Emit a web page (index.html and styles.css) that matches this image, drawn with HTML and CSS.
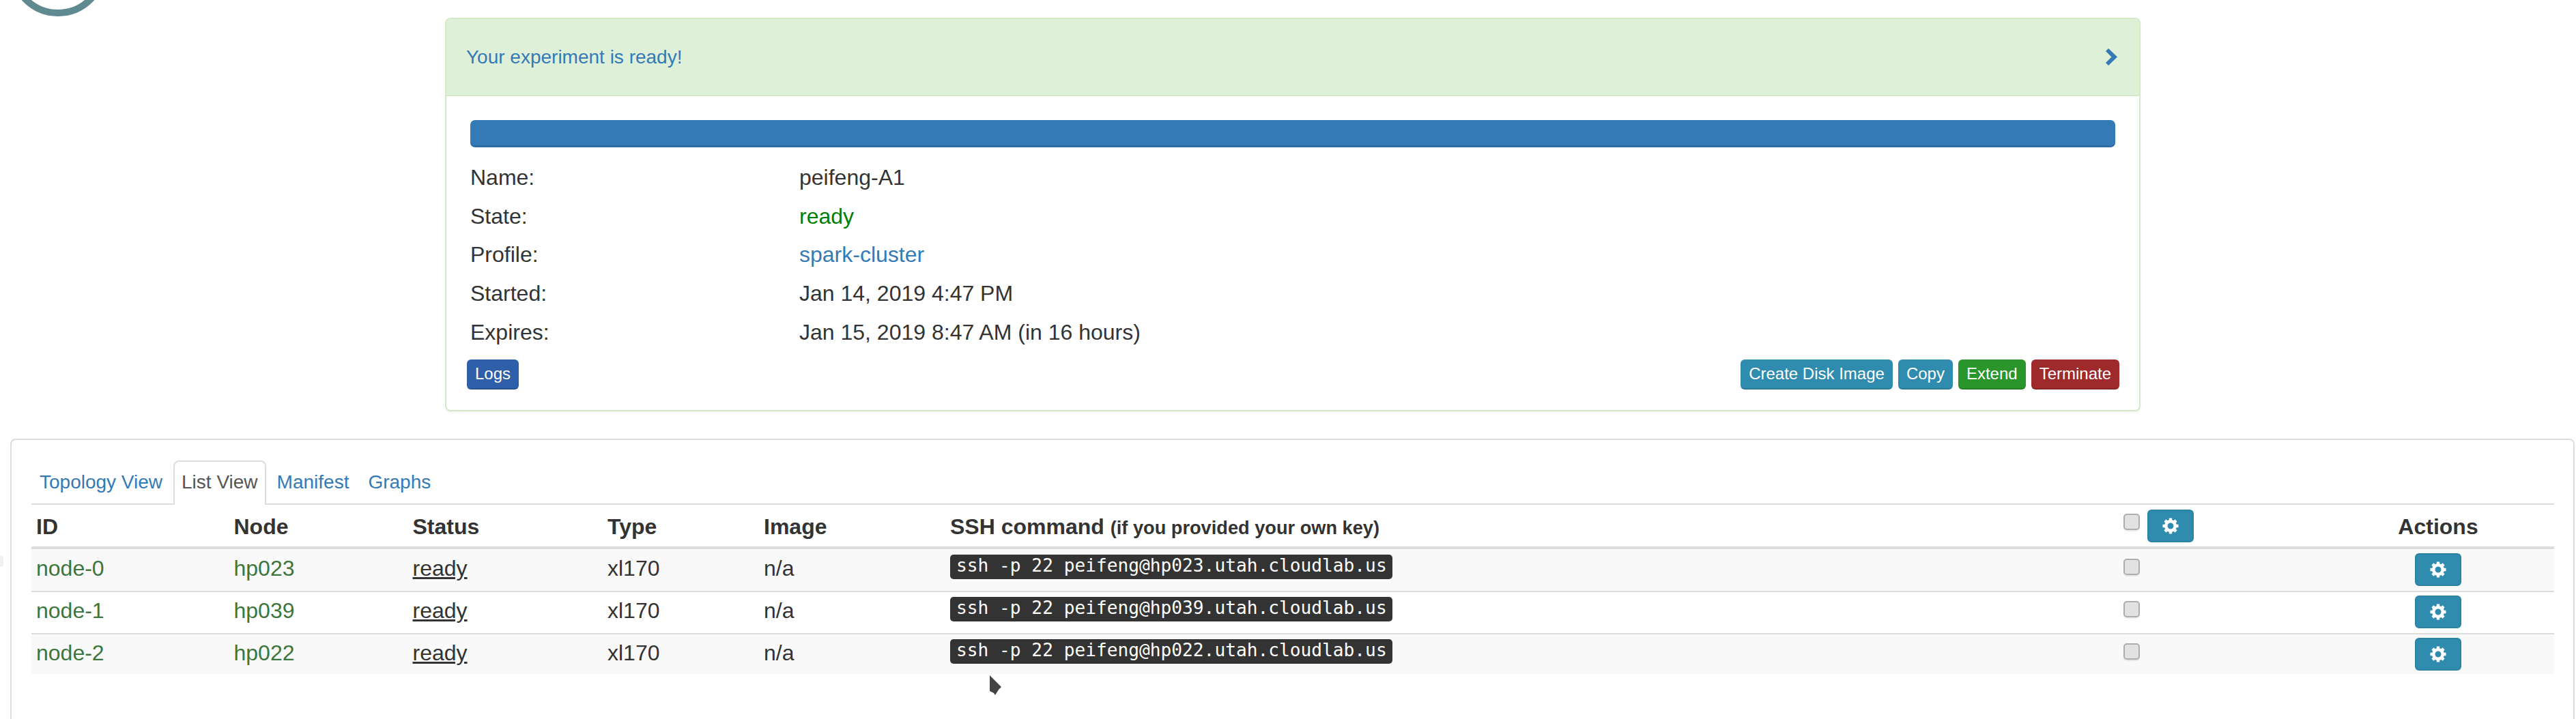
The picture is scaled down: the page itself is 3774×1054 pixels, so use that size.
FILE: index.html
```html
<!DOCTYPE html>
<html lang="en">
<head>
	<meta charset="UTF-8">
	<title>experiment status</title>
	<link rel="stylesheet" href="styles.css">
</head>
<body>
	<!-- bottom of the logo ring, cut off by the page top -->
	<svg class="logo" width="170" height="30" viewBox="0 0 170 30"><circle cx="85" cy="-47.5" r="66.5" fill="none" stroke="#5f8a90" stroke-width="10"/></svg>
	<div class="edge-tab"></div>

	<div class="status-panel">
		<div class="status-head">
			<span>Your experiment is ready!</span>
			<svg class="chevron" width="17" height="25" viewBox="0 0 17 25"><polygon points="0,4 4,0 17,12.5 4,25 0,21 8.5,12.5" fill="#337ab7"/></svg>
		</div>
		<div class="status-body">
			<div class="progress"></div>
			<dl class="info">
				<dt>Name:</dt><dd>peifeng-A1</dd>
				<dt>State:</dt><dd class="state-ready">ready</dd>
				<dt>Profile:</dt><dd><a href="#">spark-cluster</a></dd>
				<dt>Started:</dt><dd>Jan 14, 2019 4:47 PM</dd>
				<dt>Expires:</dt><dd>Jan 15, 2019 8:47 AM (in 16 hours)</dd>
			</dl>
			<div class="status-actions">
				<button class="btn btn-logs">Logs</button>
				<div class="btn-group">
					<button class="btn btn-info">Create Disk Image</button>
					<button class="btn btn-info">Copy</button>
					<button class="btn btn-extend">Extend</button>
					<button class="btn btn-danger">Terminate</button>
				</div>
			</div>
		</div>
	</div>

	<div class="view-panel">
		<ul class="tabs">
			<li><a href="#">Topology View</a></li>
			<li class="active"><a href="#">List View</a></li>
			<li><a href="#">Manifest</a></li>
			<li><a href="#">Graphs</a></li>
		</ul>
		<table class="nodes">
			<colgroup>
				<col class="c-id"><col class="c-node"><col class="c-status"><col class="c-type"><col class="c-image"><col class="c-ssh"><col class="c-check"><col class="c-actions">
			</colgroup>
			<thead>
				<tr>
					<th>ID</th>
					<th>Node</th>
					<th>Status</th>
					<th>Type</th>
					<th>Image</th>
					<th>SSH command <small>(if you provided your own key)</small></th>
					<th class="th-tools">
						<div class="tools">
							<input type="checkbox" class="check">
							<button class="gear-btn"><svg width="24" height="24" viewBox="0 0 24 24"><use href="#cog"/></svg></button>
						</div>
					</th>
					<th class="center">Actions</th>
				</tr>
			</thead>
			<tbody>
				<tr>
					<td class="node-link">node-0</td>
					<td class="node-link">hp023</td>
					<td><a class="status-link" href="#">ready</a></td>
					<td>xl170</td>
					<td>n/a</td>
					<td><code>ssh -p 22 peifeng@hp023.utah.cloudlab.us</code></td>
					<td><input type="checkbox" class="check check-row"></td>
					<td class="center"><button class="gear-btn"><svg width="24" height="24" viewBox="0 0 24 24"><use href="#cog"/></svg></button></td>
				</tr>
				<tr>
					<td class="node-link">node-1</td>
					<td class="node-link">hp039</td>
					<td><a class="status-link" href="#">ready</a></td>
					<td>xl170</td>
					<td>n/a</td>
					<td><code>ssh -p 22 peifeng@hp039.utah.cloudlab.us</code></td>
					<td><input type="checkbox" class="check check-row"></td>
					<td class="center"><button class="gear-btn"><svg width="24" height="24" viewBox="0 0 24 24"><use href="#cog"/></svg></button></td>
				</tr>
				<tr>
					<td class="node-link">node-2</td>
					<td class="node-link">hp022</td>
					<td><a class="status-link" href="#">ready</a></td>
					<td>xl170</td>
					<td>n/a</td>
					<td><code>ssh -p 22 peifeng@hp022.utah.cloudlab.us</code></td>
					<td><input type="checkbox" class="check check-row"></td>
					<td class="center"><button class="gear-btn"><svg width="24" height="24" viewBox="0 0 24 24"><use href="#cog"/></svg></button></td>
				</tr>
			</tbody>
		</table>
	</div>

	<!-- mouse pointer caught in the screenshot -->
	<svg class="pointer" width="24" height="36" viewBox="-3 -3 24 36"><polygon points="0,0 17,17 13,21 8,29 6,26 0,23" fill="#444" stroke="#fff" stroke-width="2" paint-order="stroke" stroke-linejoin="round"/></svg>

	<svg class="defs" width="0" height="0">
		<defs>
			<g id="cog" fill="none" stroke="#fff">
				<circle cx="12" cy="12" r="6.8" stroke-width="4.6"/>
				<path stroke-width="4.4" d="M12 .5v5M12 18.5v5M.5 12h5M18.5 12h5M3.9 3.9l3.5 3.5M16.6 16.6l3.5 3.5M20.1 3.9l-3.5 3.5M7.4 16.6l-3.5 3.5"/>
			</g>
		</defs>
	</svg>
</body>
</html>
```

FILE: styles.css
```css
html,
body {
	height: 100%;
}
body {
	margin: 0;
	overflow: hidden;
	position: relative;
	background: #fff;
	color: #333;
	font-family: "Liberation Sans", Arial, sans-serif;
	font-size: 32px;
}
a {
	color: #337ab7;
	text-decoration: none;
}
ul,
dl,
dd,
dt {
	margin: 0;
	padding: 0;
}
li {
	list-style: none;
}

.logo {
	position: absolute;
	left: 0;
	top: 0;
}
.edge-tab {
	position: absolute;
	left: 0;
	top: 815px;
	width: 5px;
	height: 16px;
	background: #f1f1f1;
	border-radius: 0 3px 3px 0;
}
.pointer {
	position: absolute;
	left: 1447px;
	top: 987px;
}
.defs {
	position: absolute;
}

/* top panel */
.status-panel {
	box-sizing: border-box;
	width: 2484px;
	margin: 26px 0 0 652px;
	border: 2px solid #d6e9c6;
	border-radius: 8px;
	box-shadow: 0 2px 3px rgba(0, 0, 0, .05);
}
.status-head {
	display: flex;
	justify-content: space-between;
	align-items: center;
	height: 111px;
	padding: 0 32px 0 29px;
	background: #dff0d8;
	border-bottom: 2px solid #d6e9c6;
	border-radius: 6px 6px 0 0;
	color: #337ab7;
	font-size: 28px;
}
.status-body {
	padding: 35px 35px 30px;
}
.progress {
	height: 40px;
	background: #337ab7;
	border-bottom: 3px solid #2e6da4;
	border-radius: 7px;
	box-sizing: border-box;
}
.info {
	display: grid;
	grid-template-columns: 482px 1fr;
	grid-auto-rows: 56.8px;
	align-items: center;
	margin-top: 16px;
}
.state-ready {
	color: #008000;
}
.status-actions {
	display: flex;
	justify-content: space-between;
	margin: 11px -6px 0 -5px;
}
.btn-group {
	display: flex;
	gap: 8px;
}
.btn {
	height: 44px;
	padding: 0 12px;
	border: 0;
	border-bottom: 2px solid rgba(0, 0, 0, .12);
	border-radius: 6px;
	color: #fff;
	font-family: inherit;
	font-size: 24px;
}
.btn-logs {
	background: #2e5fa8;
}
.btn-info {
	background: #2f8cae;
}
.btn-extend {
	background: #2a952b;
}
.btn-danger {
	background: #9e2a2b;
}

/* lower panel, runs on past the bottom of the shot */
.view-panel {
	box-sizing: border-box;
	height: 411px;
	margin: 40px 2px 0 15px;
	padding: 30px 28px 0 29px;
	border: 2px solid #ddd;
	border-bottom: 0;
	border-radius: 8px 8px 0 0;
}
.tabs {
	display: flex;
	gap: 4px;
	height: 63px;
	border-bottom: 2px solid #ddd;
	font-size: 28px;
}
.tabs li {
	height: 63px;
	margin-bottom: -2px;
	border: 2px solid transparent;
	border-bottom: 0;
	border-radius: 8px 8px 0 0;
}
.tabs a {
	display: block;
	padding: 0 10px;
	line-height: 60px;
}
.tabs .active {
	height: 65px;
	box-sizing: border-box;
	border-color: #ddd;
	background: #fff;
}
.tabs .active a {
	color: #555;
}

.nodes {
	width: 3696px;
	table-layout: fixed;
	border-collapse: separate;
	border-spacing: 0;
}
.c-id { width: 289.5px; }
.c-node { width: 262px; }
.c-status { width: 285.5px; }
.c-type { width: 229px; }
.c-image { width: 273px; }
.c-ssh { width: 1719px; }
.c-check { width: 298px; }
.c-actions { width: 340px; }

.nodes th,
.nodes td {
	box-sizing: border-box;
	padding: 5px 7px 0;
	text-align: left;
	vertical-align: top;
	line-height: 44px;
	white-space: nowrap;
}
.nodes th {
	height: 65px;
	padding-top: 10px;
	border-bottom: 4px solid #ddd;
}
.nodes th small {
	font-size: 27.2px;
}
.nodes .th-tools {
	padding-top: 7px;
}
.tools {
	display: flex;
	gap: 11px;
}
.nodes .center {
	text-align: center;
}
.nodes td {
	height: 62px;
	border-top: 2px solid #ddd;
}
.nodes tbody tr:first-child td {
	height: 61px;
	padding-top: 6px;
	border-top: 0;
}
.nodes tbody tr:last-child td {
	height: 60px;
}
.nodes tbody tr:nth-child(odd) td {
	background: #f9f9f9;
}
.node-link {
	color: #3c763d;
}
.status-link {
	color: #333;
	text-decoration: underline;
	text-decoration-thickness: 3px;
}
.nodes code {
	display: inline-block;
	margin-top: 2px;
	padding: 0 8px 0 9px;
	height: 36px;
	background: #333;
	border-radius: 5px;
	color: #fff;
	font-family: "DejaVu Sans Mono", monospace;
	font-size: 26.2px;
	line-height: 32px;
	vertical-align: top;
}
.check {
	appearance: none;
	box-sizing: border-box;
	display: block;
	width: 24px;
	height: 24px;
	margin: 6px 0 0;
	background: #e2e2e2;
	border: 2px solid #aeaeae;
	border-radius: 5px;
	box-shadow: 0 2px 1px rgba(0, 0, 0, .08);
}
.check-row {
	margin-top: 8px;
}
.gear-btn {
	display: inline-flex;
	align-items: center;
	justify-content: center;
	box-sizing: border-box;
	width: 68px;
	height: 48px;
	padding: 0;
	background: #2f8cae;
	border: 2px solid #2b83a3;
	border-radius: 6px;
}
```
